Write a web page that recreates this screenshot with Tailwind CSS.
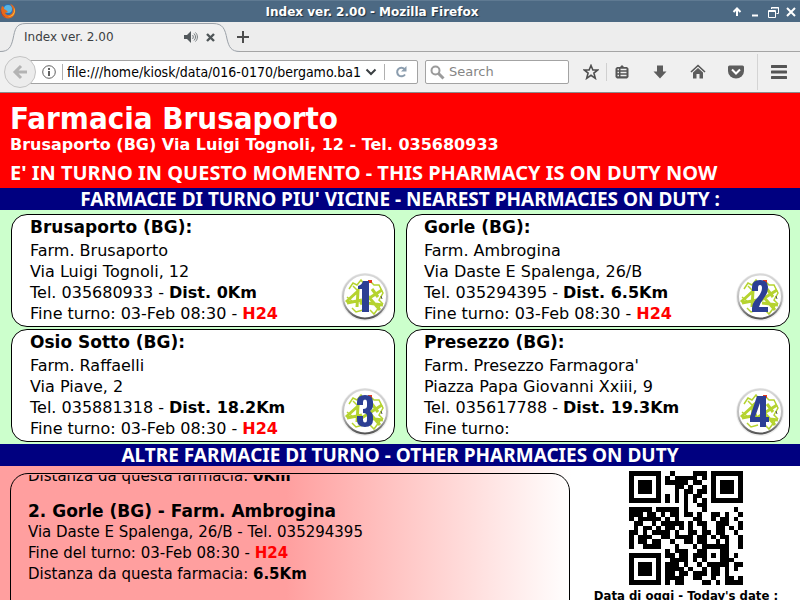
<!DOCTYPE html>
<html lang="it">
<head>
	<meta charset="UTF-8">
	<meta name="viewport" content="width=device-width, initial-scale=1.0">
	<title>Index ver. 2.00</title>
	<script src="https://cdn.jsdelivr.net/npm/@tailwindcss/browser@4"></script>
</head>
<body class="flex flex-col h-screen overflow-hidden bg-white text-black font-['DejaVu_Sans',sans-serif]">
	<!-- WINDOW: TITLE BAR -->
	<header class="relative flex flex-none items-center justify-end h-[22px] bg-[#4c6983] border-t border-[#5f7a92] text-white">
		<svg class="absolute left-0 top-[2px]" width="16" height="16" viewBox="0 0 16 16">
			<circle cx="8" cy="8" r="7" fill="#2a6fb5" />
			<circle cx="8" cy="6" r="4" fill="#57b4e2" />
			<path d="M2 3C0 7 1 15 8 15.500C13 15.500 16 11 15 6C14 3 12 1.500 10 1C13 4 13.500 8 12 10C10 13 6 12.500 5 10L8 9L6 7L4 6L4 4Z" fill="#e66a1b" />
			<path d="M14.500 5C15 10 12 13 8 13.500C12 14.500 15.500 11 15 6Z" fill="#fbc843" />
			<path d="M1 6C1 10 3 13 6 14.500C3 14 0 10 1 6Z" fill="#b5301a" />
		</svg>
		<h1 class="absolute inset-x-0 -left-14 text-center text-[12px] leading-[22px] font-bold [text-shadow:1px_1px_1px_#1d2f40]">Index ver. 2.00 - Mozilla Firefox</h1>
		<div class="relative flex items-center gap-[6px] pr-[3px]">
			<button aria-label="Shade"><svg width="12" height="12" viewBox="0 0 12 12" fill="none" stroke="#fff" stroke-width="2"><path d="M6 10V3M2.500 6L6 2.500L9.500 6" /></svg></button>
			<button aria-label="Minimize"><svg width="12" height="12" viewBox="0 0 12 12"><path d="M3 8.500H9V10.500H3Z" fill="#fff" /></svg></button>
			<button aria-label="Restore"><svg width="12" height="12" viewBox="0 0 12 12" fill="none" stroke="#fff" stroke-width="1"><path d="M4.500 3V1.500H11.500V7.500H9.500M4 2H12M1.500 4.500H8.500V11.500H1.500ZM1 5.500H9" /></svg></button>
			<button aria-label="Close"><svg width="12" height="12" viewBox="0 0 12 12" fill="none" stroke="#fff" stroke-width="2"><path d="M2 2L10 10M10 2L2 10" /></svg></button>
		</div>
	</header>
	<!-- WINDOW: TABS -->
	<nav class="flex flex-none h-[30px] bg-[#ededed] border-b border-[#a5a5a5]">
		<div class="relative flex items-center w-[234px] h-[30px] pl-6 text-[12px] text-[#3c4043]">
			<svg class="absolute left-0 top-0" width="240" height="30" viewBox="0 0 240 30">
				<path d="M0 29.500C9 29.500 11 25 13 17C15 7 16 1.500 26 1.500H213C223 1.500 225 7 227 17C229 25 231 29.500 240 29.500V31H0Z" fill="#f0f0f0" />
				<path d="M0 29.500C9 29.500 11 25 13 17C15 7 16 1.500 26 1.500H213C223 1.500 225 7 227 17C229 25 231 29.500 240 29.500" fill="none" stroke="#9ba1a8" />
			</svg>
			<span class="relative flex-1">Index ver. 2.00</span>
			<button class="relative mr-2" aria-label="Mute tab"><svg width="14" height="12" viewBox="0 0 14 12"><path d="M0 4H3L7 0V12L3 8H0Z" fill="#53595c" /><path d="M8.500 4C9.500 5 9.500 7 8.500 8M10 2.500C12 4.500 12 7.500 10 9.500M11.500 1.500C14 4 14 8 11.500 10.500" fill="none" stroke="#73797c" /></svg></button>
			<button class="relative mr-[19px]" aria-label="Close tab"><svg width="9" height="9" viewBox="0 0 9 9"><path d="M1 1L8 8M8 1L1 8" stroke="#4f5658" stroke-width="2.400" /></svg></button>
		</div>
		<button class="ml-[2px]" aria-label="New tab"><svg width="14" height="14" viewBox="0 0 14 14"><path d="M1 7H13M7 1V13" stroke="#4d4d4d" stroke-width="2" /></svg></button>
	</nav>
	<!-- WINDOW: TOOLBAR -->
	<div class="flex flex-none items-center h-[41px] bg-[#f0f0f0] border-b border-[#8c8c8c] pr-[13px] text-[13px]">
		<button class="relative z-10 flex flex-none items-center justify-center size-8 ml-1 rounded-full border border-[#c4c4c4] bg-[#ececec]" aria-label="Back">
			<svg width="16" height="16" viewBox="0 0 16 16" fill="none" stroke="#b3b3b3" stroke-width="3"><path d="M15 8H3M9 2L3 8L9 14" /></svg>
		</button>
		<div class="flex flex-auto items-center h-6 -ml-[7px] pl-3 border border-[#a3a3a3] rounded-r-[2px] bg-white">
			<svg class="flex-none" width="14" height="14" viewBox="0 0 14 14"><circle cx="7" cy="7" r="6.300" fill="none" stroke="#606060" /><path d="M6 3H8V5H6ZM6 6H8V11H6Z" fill="#606060" /></svg>
			<span class="flex-none w-px h-4 ml-[6px] bg-[#b0b0b0]"></span>
			<input class="flex-1 min-w-0 ml-1 outline-none text-[14px] font-['DejaVu_Sans_Condensed','DejaVu_Sans',sans-serif]" type="text" aria-label="Address" value="file:///home/kiosk/data/016-0170/bergamo.ba1">
			<svg class="flex-none ml-[3px]" width="12" height="12" viewBox="0 0 12 12"><path d="M1.500 3.500L6 8L10.500 3.500" fill="none" stroke="#3a3f42" stroke-width="2" /></svg>
			<span class="flex-none w-px h-4 ml-[7px] bg-[#b0b0b0]"></span>
			<button class="flex-none mx-[9px]" aria-label="Reload"><svg width="14" height="14" viewBox="0 0 14 14"><path d="M10.500 4A4.300 4.300 0 1 0 11 9.500" fill="none" stroke="#8b9dae" stroke-width="2" /><path d="M12.500 1V6.500H7Z" fill="#8b9dae" /></svg></button>
		</div>
		<div class="flex flex-none items-center w-36 h-6 ml-[7px] pl-1 border border-[#a3a3a3] rounded-[2px] bg-white">
			<svg class="flex-none" width="15" height="15" viewBox="0 0 15 15" fill="none" stroke="#9b9b9b"><circle cx="5.500" cy="5.500" r="4" stroke-width="2" /><path d="M8.500 8.500L13.500 13.500" stroke-width="3" /></svg>
			<input class="flex-1 min-w-0 ml-1 outline-none placeholder:text-[#858585]" type="search" aria-label="Search" placeholder="Search">
		</div>
		<button class="flex-none ml-[14px]" aria-label="Bookmark"><svg width="16" height="16" viewBox="0 0 16 16"><path d="M8 1.500L9.900 6H14.700L10.900 9L12.300 14.300L8 11.300L3.700 14.300L5.100 9L1.300 6H6.100Z" fill="none" stroke="#4f4f4f" stroke-width="1.600" /></svg></button>
		<span class="flex-none w-px h-[18px] ml-[7px] bg-[#d0d0d0]"></span>
		<button class="flex-none ml-[7px]" aria-label="Bookmarks list"><svg width="16" height="16" viewBox="0 0 16 16"><path d="M3 3H6L8 1L10 3H13L14.500 4.500V13L13 14.500H3L1.500 13V4.500Z" fill="#555" /><path d="M3.500 5.500H5M6.500 5.500H12.500M3.500 8.500H5M6.500 8.500H12.500M3.500 11.500H5M6.500 11.500H12.500" stroke="#eee" stroke-width="1.500" /></svg></button>
		<button class="flex-none ml-[22px]" aria-label="Downloads"><svg width="16" height="16" viewBox="0 0 16 16"><path d="M5 1.500H11V7.500H14.500L8 14.500L1.500 7.500H5Z" fill="#5d5d5d" /></svg></button>
		<button class="flex-none ml-[22px]" aria-label="Home"><svg width="16" height="16" viewBox="0 0 16 16"><path d="M1 8L8 1.500L15 8" fill="none" stroke="#555" stroke-width="1.600" /><path d="M3 8.500L8 4L13 8.500V14.500H9.500V10H6.500V14.500H3Z" fill="#5d5d5d" /></svg></button>
		<button class="flex-none ml-[22px]" aria-label="Pocket"><svg width="16" height="16" viewBox="0 0 16 16"><path d="M1.500 1.500H14.500Q16 1.500 16 3V7A8 7.500 0 0 1 0 7V3Q0 1.500 1.500 1.500Z" fill="#5d5d5d" /><path d="M4 5.500L8 9.500L12 5.500" fill="none" stroke="#fff" stroke-width="2" /></svg></button>
		<span class="flex-none w-px h-9 ml-[13px] bg-[#d4d4d4]"></span>
		<button class="flex-none ml-[13px]" aria-label="Menu"><svg width="16" height="16" viewBox="0 0 16 16"><path d="M1 2.500H15M1 8H15M1 13.500H15" stroke="#555" stroke-width="3" stroke-linecap="round" /></svg></button>
	</div>
	<!-- CURRENT PHARMACY -->
	<section class="flex-none px-[10px] pt-[9px] pb-[3px] bg-[#ff0000] text-white font-bold">
		<h2 class="text-[31px] leading-[33px] font-['DejaVu_Sans_Condensed','DejaVu_Sans',sans-serif]">Farmacia Brusaporto</h2>
		<p class="text-[16px] leading-5">Brusaporto (BG) Via Luigi Tognoli, 12 - Tel. 035680933</p>
		<p class="pt-[6px] text-[20px] leading-6 whitespace-nowrap font-['Noto_Sans',sans-serif]">E' IN TURNO IN QUESTO MOMENTO - THIS PHARMACY IS ON DUTY NOW</p>
	</section>
	<!-- NEAREST -->
	<h3 class="flex-none bg-[#000080] text-white text-center text-[19px] leading-[22px] font-bold whitespace-nowrap font-['Noto_Sans',sans-serif]">FARMACIE DI TURNO PIU' VICINE - NEAREST PHARMACIES ON DUTY :</h3>
	<section class="flex-none grid grid-cols-2 gap-x-[11px] gap-y-[2px] pl-[11px] pr-[10px] pt-1 pb-[2px] bg-[#ccffcc] text-[16px] leading-[21px]" id="nearest">
		<article class="relative h-[113px] pl-[18px] border border-black rounded-[16px] bg-white">
			<h4 class="text-[17px] leading-[25px] font-bold">Brusaporto (BG):</h4>
			<p>Farm. Brusaporto</p>
			<p>Via Luigi Tognoli, 12</p>
			<p>Tel. 035680933 - <b>Dist. 0Km</b></p>
			<p>Fine turno: 03-Feb 08:30 - <b class="text-[#ff0000]">H24</b></p>
			<svg class="absolute right-1 bottom-1" width="50" height="50" viewBox="0 0 50 50"><use href="#badge" /><path d="M18 14Q22 13 23 9H29V40H22V17H18Z" fill="#2c3f94" /></svg>
		</article>
		<article class="relative h-[113px] pl-[17px] border border-black rounded-[16px] bg-white">
			<h4 class="text-[17px] leading-[25px] font-bold">Gorle (BG):</h4>
			<p>Farm. Ambrogina</p>
			<p>Via Daste E Spalenga, 26/B</p>
			<p>Tel. 035294395 - <b>Dist. 6.5Km</b></p>
			<p>Fine turno: 03-Feb 08:30 - <b class="text-[#ff0000]">H24</b></p>
			<svg class="absolute right-1 bottom-1" width="50" height="50" viewBox="0 0 50 50"><use href="#badge" /><path d="M17 19V15Q17 8 25 8Q33 8 33 15Q33 21 29 26Q25 31 24 35H33V40H17V36Q17 31 23 25Q27 20 27 16Q27 13 25 13Q23 13 23 16V19Z" fill="#2c3f94" /></svg>
		</article>
		<article class="relative h-[113px] pl-[18px] border border-black rounded-[16px] bg-white">
			<h4 class="text-[17px] leading-[25px] font-bold">Osio Sotto (BG):</h4>
			<p>Farm. Raffaelli</p>
			<p>Via Piave, 2</p>
			<p>Tel. 035881318 - <b>Dist. 18.2Km</b></p>
			<p>Fine turno: 03-Feb 08:30 - <b class="text-[#ff0000]">H24</b></p>
			<svg class="absolute right-1 bottom-1" width="50" height="50" viewBox="0 0 50 50"><use href="#badge" /><path d="M17 18V15Q17 8 25 8Q33 8 33 15V18Q33 22 30 24Q33 26 33 30V33Q33 40 25 40Q17 40 17 33V29H23V33Q23 35.500 25 35.500Q27 35.500 27 33V29Q27 26 23 26V22Q27 22 27 19V15Q27 12.500 25 12.500Q23 12.500 23 15V18Z" fill="#2c3f94" /></svg>
		</article>
		<article class="relative h-[113px] pl-[17px] border border-black rounded-[16px] bg-white">
			<h4 class="text-[17px] leading-[25px] font-bold">Presezzo (BG):</h4>
			<p>Farm. Presezzo Farmagora'</p>
			<p>Piazza Papa Giovanni Xxiii, 9</p>
			<p>Tel. 035617788 - <b>Dist. 19.3Km</b></p>
			<p>Fine turno:</p>
			<svg class="absolute right-1 bottom-1" width="50" height="50" viewBox="0 0 50 50"><use href="#badge" /><path d="M22 9H31V30H34V35H31V40H25V35H15V30ZM25 16L20 30H25Z" fill="#2c3f94" fill-rule="evenodd" /></svg>
		</article>
	</section>
	<!-- OTHERS -->
	<h3 class="flex-none bg-[#000080] text-white text-center text-[19px] leading-[22px] font-bold whitespace-nowrap font-['Noto_Sans',sans-serif]">ALTRE FARMACIE DI TURNO - OTHER PHARMACIES ON DUTY</h3>
	<main class="flex flex-1 min-h-0">
		<section class="flex flex-1 pl-[10px] pr-[2px] pt-[7px] bg-linear-to-r from-[#ff9f9f] from-50% to-white">
			<div class="flex-1 h-40 pt-px pl-[17px] border border-black rounded-[18px]">
				<!-- scrolling list -->
				<div class="h-full overflow-hidden text-[15px] leading-[21px]">
					<div class="-mt-[9px]">
						<p>Distanza da questa farmacia: <b>0Km</b></p>
						<h4 class="pt-[13px] text-[17px] leading-[22px] font-bold">2. Gorle (BG) - Farm. Ambrogina</h4>
						<p>Via Daste E Spalenga, 26/B - Tel. 035294395</p>
						<p>Fine del turno: 03-Feb 08:30 - <b class="text-[#ff0000]">H24</b></p>
						<p>Distanza da questa farmacia: <b>6.5Km</b></p>
					</div>
				</div>
			</div>
		</section>
		<aside class="flex flex-none flex-col items-center w-[228px] pt-[5px]">
			<svg id="qr" class="flex-none" width="114" height="114" viewBox="0 0 25 25" shape-rendering="crispEdges" role="img" aria-label="QR code"></svg>
			<p class="pt-[3px] text-[13px] leading-4 font-bold whitespace-nowrap font-['DejaVu_Sans_Condensed','DejaVu_Sans',sans-serif]">Data di oggi - Today's date :</p>
		</aside>
	</main>
	<!-- badge background, shared by the four cards -->
	<svg class="absolute" width="0" height="0">
		<defs>
			<linearGradient id="rim" x1="0" y1="0" x2="0" y2="1"><stop offset="0" stop-color="#d8d8d8" /><stop offset=".6" stop-color="#bdbdbd" /><stop offset="1" stop-color="#555" /></linearGradient>
			<g id="badge">
				<circle cx="25" cy="25" r="24" fill="#eee" />
				<circle cx="25" cy="24.500" r="22" fill="#fff" stroke="url(#rim)" stroke-width="2" />
				<path d="M9 17L13 11L17 13L21 8L24 12M13 14L17 18L21 15M30 9L34 13L39 13L43 21L39 28L43 32M7 25L13 30L20 28M12 36L16 40L23 38M30 38L34 42L40 34" fill="none" stroke="#b5d32f" stroke-width="1.500" />
				<path d="M6 30L18 19L17 35M7 31L22 28M20 32L42 18M26 22L40 38M27 31L43 33M32 17L38 25" fill="none" stroke="#b5d32f" stroke-width="3" />
				<path d="M28 8H32V11H28Z" fill="#e33b1e" />
				<path d="M41 24L42 27" stroke="#555" />
			</g>
		</defs>
	</svg>
	<script>
		const rows = [
			'#######..#....###.#######',
			'#.....#.#.#####.#.#.....#',
			'#.###.#.#####.##..#.###.#',
			'#.###.#...##.#..#.#.###.#',
			'#.###.#...#.##.##.#.###.#',
			'#.....#.#.#.#.##..#.....#',
			'#######.#.#.#.#.#.#######',
			'............#..##........',
			'#####.#####.#...#......#.',
			'###.##.#.##.##.#..##.#..#',
			'#.#####.#.#...##..#.##.#.',
			'.##..#.#####.#.##..###..#',
			'.#.##.#.##.#.#..#..##.#.#',
			'##.#.####.#..##.##.##..#.',
			'#.###..##.####.##.#.##..#',
			'#.##.##..#..##.##..#.#..#',
			'#..####...#...#.######..#',
			'........#.###..##...##...',
			'#######.##.##.###.#.##.#.',
			'#.....#..####.#.#...###..',
			'#.###.#.###.#..#.#####.##',
			'#.###.#.####.#..#.##.#.#.',
			'#.###.#.##.##.###.##.#...',
			'#.....#.####..##..#..##.#',
			'#######.#.##....##.#.####'
		];
		const d = rows.map((row, y) => [...row].map((c, x) => c === '#' ? `M${x} ${y}h1v1h-1z` : '').join('')).join('');
		document.getElementById('qr').innerHTML = `<path d="${d}"/>`;
	</script>
</body>
</html>
